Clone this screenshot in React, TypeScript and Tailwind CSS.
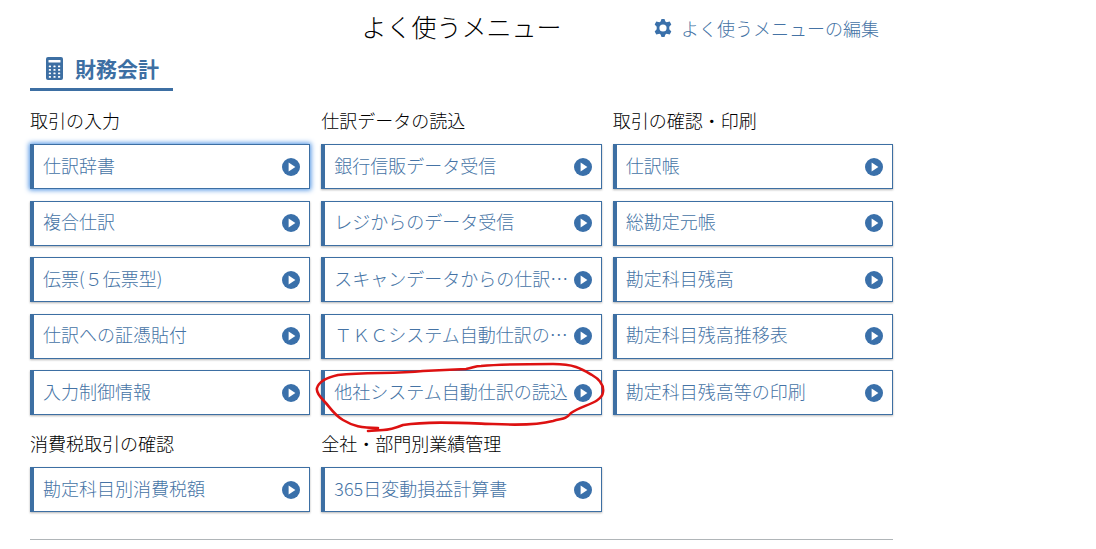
type MenuItem = {
  label: string;
  active?: boolean;
  marked?: boolean;
};

type MenuGroup = {
  title: string;
  items: MenuItem[];
};

const mainGroups: MenuGroup[] = [
  {
    title: "取引の入力",
    items: [
      { label: "仕訳辞書", active: true },
      { label: "複合仕訳" },
      { label: "伝票(５伝票型)" },
      { label: "仕訳への証憑貼付" },
      { label: "入力制御情報" },
    ],
  },
  {
    title: "仕訳データの読込",
    items: [
      { label: "銀行信販データ受信" },
      { label: "レジからのデータ受信" },
      { label: "スキャンデータからの仕訳…" },
      { label: "ＴＫＣシステム自動仕訳の…" },
      { label: "他社システム自動仕訳の読込", marked: true },
    ],
  },
  {
    title: "取引の確認・印刷",
    items: [
      { label: "仕訳帳" },
      { label: "総勘定元帳" },
      { label: "勘定科目残高" },
      { label: "勘定科目残高推移表" },
      { label: "勘定科目残高等の印刷" },
    ],
  },
];

const subGroups: MenuGroup[] = [
  { title: "消費税取引の確認", items: [{ label: "勘定科目別消費税額" }] },
  { title: "全社・部門別業績管理", items: [{ label: "365日変動損益計算書" }] },
];

function GearIcon() {
  return (
    <svg width="18" height="18" viewBox="0 0 18 18" fill="currentColor" aria-hidden="true">
      <path
        fillRule="evenodd"
        d="M7.500 0h3l.9 2.500 1.200.7 3.100-.6 1.600 2.800-2 2.300v2.600l2 2.300-1.600 2.800-3.100-.6-1.200.7-.9 2.500h-3l-.9-2.500-1.200-.7-3.100.6L.7 12.600l2-2.300V7.700l-2-2.300 1.600-2.800 3.100.6 1.200-.7zM9 5.400a3.600 3.600 0 1 0 0 7.200a3.600 3.600 0 0 0 0-7.200z"
      />
    </svg>
  );
}

function CalculatorIcon() {
  return (
    <svg width="17" height="23" viewBox="0 0 17 23" aria-hidden="true">
      <rect width="17" height="23" rx="2" fill="currentColor" />
      <g fill="#fff">
        <rect x="2.500" y="3" width="12" height="2.500" rx=".5" />
        {[8.5, 12, 15.5, 19].map((y) =>
          [2.8, 7.4, 12].map((x) => (
            <rect key={`${x}-${y}`} x={x} y={y} width="2.2" height="1.800" rx=".6" />
          ))
        )}
      </g>
    </svg>
  );
}

function PlayIcon() {
  return (
    <svg
      className="shrink-0"
      width="18"
      height="18"
      viewBox="0 0 18 18"
      aria-hidden="true"
    >
      <circle cx="9" cy="9" r="9" fill="currentColor" />
      <path d="M6.600 4.600v8.800L13.400 9z" fill="#fff" />
    </svg>
  );
}

/* Hand-drawn red ring around a menu button */
function RedMark() {
  return (
    <svg
      className="pointer-events-none absolute -left-2 -top-3 z-10"
      width="300"
      height="76"
      viewBox="0 0 300 76"
      fill="none"
      stroke="#dd1111"
      strokeWidth="2.600"
      strokeLinecap="round"
      strokeLinejoin="round"
      aria-hidden="true"
    >
      <path d="M65 70C48 70 40 68 30 62C20 56 17 49 11 43C6 38 3 34 4 30C6 23 16 19 25 17C55 14 80 16 110 13L153 11C160 10 162 8 168 8C190 6 215 6 240 6C262 6 269 11 279 17C286 21 291 27 290 34C289 45 269 47 258 55C252 62 250 60 240 63C225 67 200 67 180 66C150 65 115 63 90 67C80 71 75 72 70 72L55 73" />
    </svg>
  );
}

function MenuButton({ label, active, marked }: MenuItem) {
  return (
    <li className="relative">
      <button
        type="button"
        className={`flex h-[45px] w-full items-center justify-between border border-l-4 border-[#3d6fa3] bg-white pl-[9px] pr-[9px] text-left text-[18px] leading-6 text-[#4573a5] ${
          active
            ? "shadow-[0_0_5px_1px_#4a90e2]"
            : "shadow-[0_1px_2px_rgba(0,0,0,0.3)]"
        }`}
      >
        <span className="truncate pb-1">{label}</span>
        <span className="text-[#3a70aa]">
          <PlayIcon />
        </span>
      </button>
      {marked && <RedMark />}
    </li>
  );
}

function Group({ title, items }: MenuGroup) {
  return (
    <section className="flex flex-col">
      <h3 className="mb-3 text-[18px] leading-6 text-black">{title}</h3>
      <ul
        className={`flex flex-col justify-between ${
          items.length > 1 ? "min-h-[271px]" : ""
        }`}
      >
        {items.map((item) => (
          <MenuButton key={item.label} {...item} />
        ))}
      </ul>
    </section>
  );
}

export default function App() {
  return (
    <main
      lang="ja"
      className="mx-[30px] max-w-[863px] bg-white pt-2 font-['Noto_Sans_CJK_JP',sans-serif] font-light"
    >
      <header className="grid grid-cols-[1fr_auto_1fr] items-center">
        <h1 className="col-start-2 text-[25px] leading-9 text-black">
          よく使うメニュー
        </h1>
        <a
          href="#edit"
          className="mr-[14px] flex items-center gap-[9px] justify-self-end whitespace-nowrap pt-1 text-[18px] leading-6 text-[#4573a5]"
        >
          <span className="text-[#3a70aa]">
            <GearIcon />
          </span>
          よく使うメニューの編集
        </a>
      </header>

      <h2 className="inline-flex h-[47px] items-center gap-3 border-b-[3px] border-[#3d6fa3] pl-4 pr-[14px] pt-1 text-[21px] font-bold leading-7 text-[#3d6fa3]">
        <CalculatorIcon />
        財務会計
      </h2>

      <div className="mt-[17px] grid grid-cols-3 gap-x-[11px] gap-y-4 border-b border-[#b0b5b8] pb-[27px]">
        {[...mainGroups, ...subGroups].map((group) => (
          <Group key={group.title} {...group} />
        ))}
      </div>
    </main>
  );
}
